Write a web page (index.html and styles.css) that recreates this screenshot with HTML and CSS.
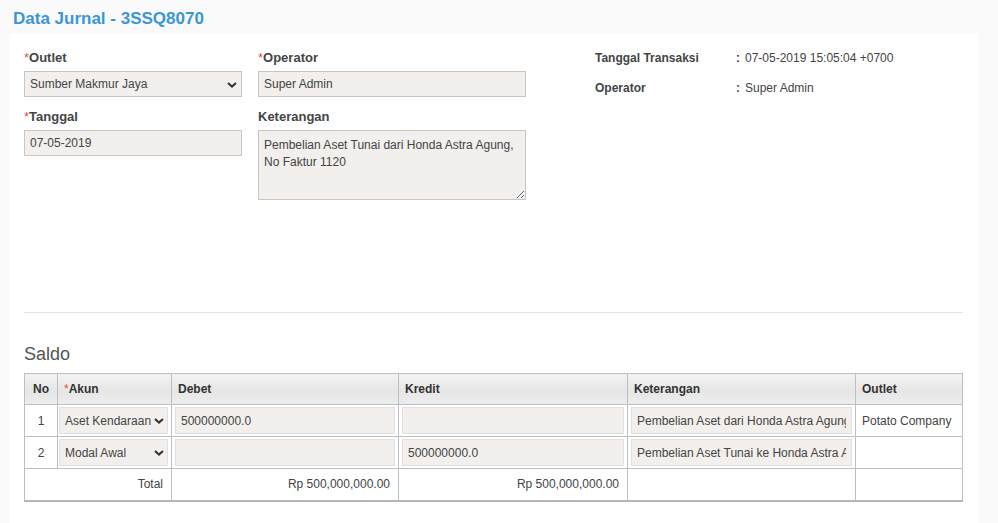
FILE: index.html
```html
<!DOCTYPE html>
<html>
  <head>
    <title>Data Jurnal</title>
    <link rel="stylesheet" href="styles.css">
  </head>
  <body>
    <h1 class="page-title">Data Jurnal - 3SSQ8070</h1>
    <div class="panel">
      <div class="form-top">
        <div class="form-col col-a">
          <label class="field-label"><span class="req">*</span>Outlet</label>
          <div class="select-wrap">
            <select class="field">
              <option>Sumber Makmur Jaya</option>
            </select>
            <svg class="chev" width="10" height="6" viewBox="0 0 10 6"><path d="M1 1 L5 4.6 L9 1" fill="none" stroke="#333" stroke-width="2"/></svg>
          </div>
          <label class="field-label"><span class="req">*</span>Tanggal</label>
          <input class="field" type="text" value="07-05-2019" readonly>
        </div>
        <div class="form-col col-b">
          <label class="field-label"><span class="req">*</span>Operator</label>
          <input class="field" type="text" value="Super Admin" readonly>
          <label class="field-label">Keterangan</label>
          <textarea class="field area" readonly>Pembelian Aset Tunai dari Honda Astra Agung, No Faktur 1120</textarea>
        </div>
        <div class="info">
          <div class="info-row">
            <span class="info-key">Tanggal Transaksi</span>
            <span class="info-colon">:</span>
            <span>07-05-2019 15:05:04 +0700</span>
          </div>
          <div class="info-row">
            <span class="info-key">Operator</span>
            <span class="info-colon">:</span>
            <span>Super Admin</span>
          </div>
        </div>
      </div>

      <hr class="divider">

      <h2 class="section-title">Saldo</h2>
      <table class="saldo">
        <thead>
          <tr>
            <th class="c-no">No</th>
            <th class="c-akun"><span class="req">*</span>Akun</th>
            <th class="c-debet">Debet</th>
            <th class="c-kredit">Kredit</th>
            <th class="c-ket">Keterangan</th>
            <th class="c-outlet">Outlet</th>
          </tr>
        </thead>
        <tbody>
          <tr>
            <td class="num">1</td>
            <td class="in sel">
              <div class="select-wrap">
                <select class="cell-field"><option>Aset Kendaraan</option></select>
                <svg class="chev cell-chev" width="10" height="6" viewBox="0 0 10 6"><path d="M1 1 L5 4.6 L9 1" fill="none" stroke="#333" stroke-width="2"/></svg>
              </div>
            </td>
            <td class="in"><input class="cell-field" type="text" value="500000000.0"></td>
            <td class="in"><input class="cell-field" type="text" value=""></td>
            <td class="in"><input class="cell-field" type="text" value="Pembelian Aset dari Honda Astra Agung"></td>
            <td>Potato Company</td>
          </tr>
          <tr>
            <td class="num">2</td>
            <td class="in sel">
              <div class="select-wrap">
                <select class="cell-field"><option>Modal Awal</option></select>
                <svg class="chev cell-chev" width="10" height="6" viewBox="0 0 10 6"><path d="M1 1 L5 4.6 L9 1" fill="none" stroke="#333" stroke-width="2"/></svg>
              </div>
            </td>
            <td class="in"><input class="cell-field" type="text" value=""></td>
            <td class="in"><input class="cell-field" type="text" value="500000000.0"></td>
            <td class="in"><input class="cell-field" type="text" value="Pembelian Aset Tunai ke Honda Astra Agung"></td>
            <td></td>
          </tr>
          <tr class="total">
            <td colspan="2" class="right">Total</td>
            <td class="right">Rp 500,000,000.00</td>
            <td class="right">Rp 500,000,000.00</td>
            <td></td>
            <td></td>
          </tr>
        </tbody>
      </table>
    </div>
  </body>
</html>
```

FILE: styles.css
```css
body {
  margin: 0;
  background-color: #fafafa;
  font-family: "Liberation Sans", Arial, sans-serif;
  font-size: 12px;
  color: #444;
}

.page-title {
  margin: 0;
  padding: 9px 13px 0;
  height: 24px;
  font-size: 17px;
  line-height: 20px;
  font-weight: bold;
  color: #3a97d6;
}

.panel {
  background-color: #fff;
  margin-left: 9px;
  width: 969px;
  min-height: 490px;
  padding: 17px 15px 0;
  box-sizing: border-box;
}

.form-top {
  display: flex;
  height: 262px;
}

.form-col {
  display: flex;
  flex-direction: column;
}

.col-a {
  width: 218px;
  margin-right: 16px;
}

.col-b {
  width: 268px;
  margin-right: 69px;
}

.field-label {
  display: block;
  font-size: 13px;
  font-weight: bold;
  line-height: 15px;
  color: #444;
  margin-bottom: 6px;
}

.req {
  color: #d9534f;
  font-weight: normal;
}

.field {
  width: 100%;
  height: 26px;
  margin: 0 0 12px;
  padding: 0 5px;
  border: 1px solid #c6c6c6;
  background-color: #f2efec;
  font-family: "Liberation Sans", Arial, sans-serif;
  font-size: 12px;
  color: #444;
  box-sizing: border-box;
  outline: none;
}

.select-wrap {
  position: relative;
}

select.field,
select.cell-field {
  appearance: none;
  -webkit-appearance: none;
  border-radius: 0;
}

.chev {
  position: absolute;
  right: 5px;
  top: 11px;
  pointer-events: none;
}

.cell-chev {
  right: 4px;
  top: 11px;
}

.area {
  height: 70px;
  padding: 6px 5px;
  line-height: 17px;
  resize: vertical;
}

.info {
  padding-top: 1px;
}

.info-row {
  display: flex;
  height: 30px;
  line-height: 14px;
}

.info-key {
  width: 141px;
  font-weight: bold;
}

.info-colon {
  width: 9px;
  font-weight: bold;
}

.divider {
  border: none;
  border-top: 1px solid #e2e2e2;
  margin: 0;
}

.section-title {
  margin: 31px 0 9px;
  font-size: 18px;
  font-weight: normal;
  line-height: 20px;
  color: #555;
}

.saldo {
  width: 939px;
  border-collapse: collapse;
  border: 1px solid #b9c1c4;
  border-bottom: 2px solid #b0b8bb;
}

.saldo th,
.saldo td {
  border: 1px solid #b9c1c4;
  height: 31px;
  padding: 0 6px;
  text-align: left;
  box-sizing: border-box;
}

.saldo th {
  font-weight: bold;
  color: #333;
  background: linear-gradient(#f3f3f3, #e6e6e6 55%, #ededed);
}

.saldo th.c-no {
  text-align: center;
}

.saldo th .req {
  color: #d9534f;
}

.c-no { width: 33px; }
.c-akun { width: 114px; }
.c-debet { width: 227px; }
.c-kredit { width: 229px; }
.c-ket { width: 228px; }

.saldo td.num {
  text-align: center;
}

.saldo td.in {
  padding: 2px 3px;
}

.saldo td.sel {
  padding-left: 1px;
}

.saldo td.right {
  text-align: right;
  padding-right: 8px;
}

.cell-field {
  display: block;
  width: 100%;
  height: 27px;
  margin: 0;
  padding: 0 5px;
  border: 1px solid #e2e0de;
  background-color: #f2efec;
  font-family: "Liberation Sans", Arial, sans-serif;
  font-size: 12px;
  color: #444;
  box-sizing: border-box;
  outline: none;
}

.total td {
  height: 32px;
}
```
